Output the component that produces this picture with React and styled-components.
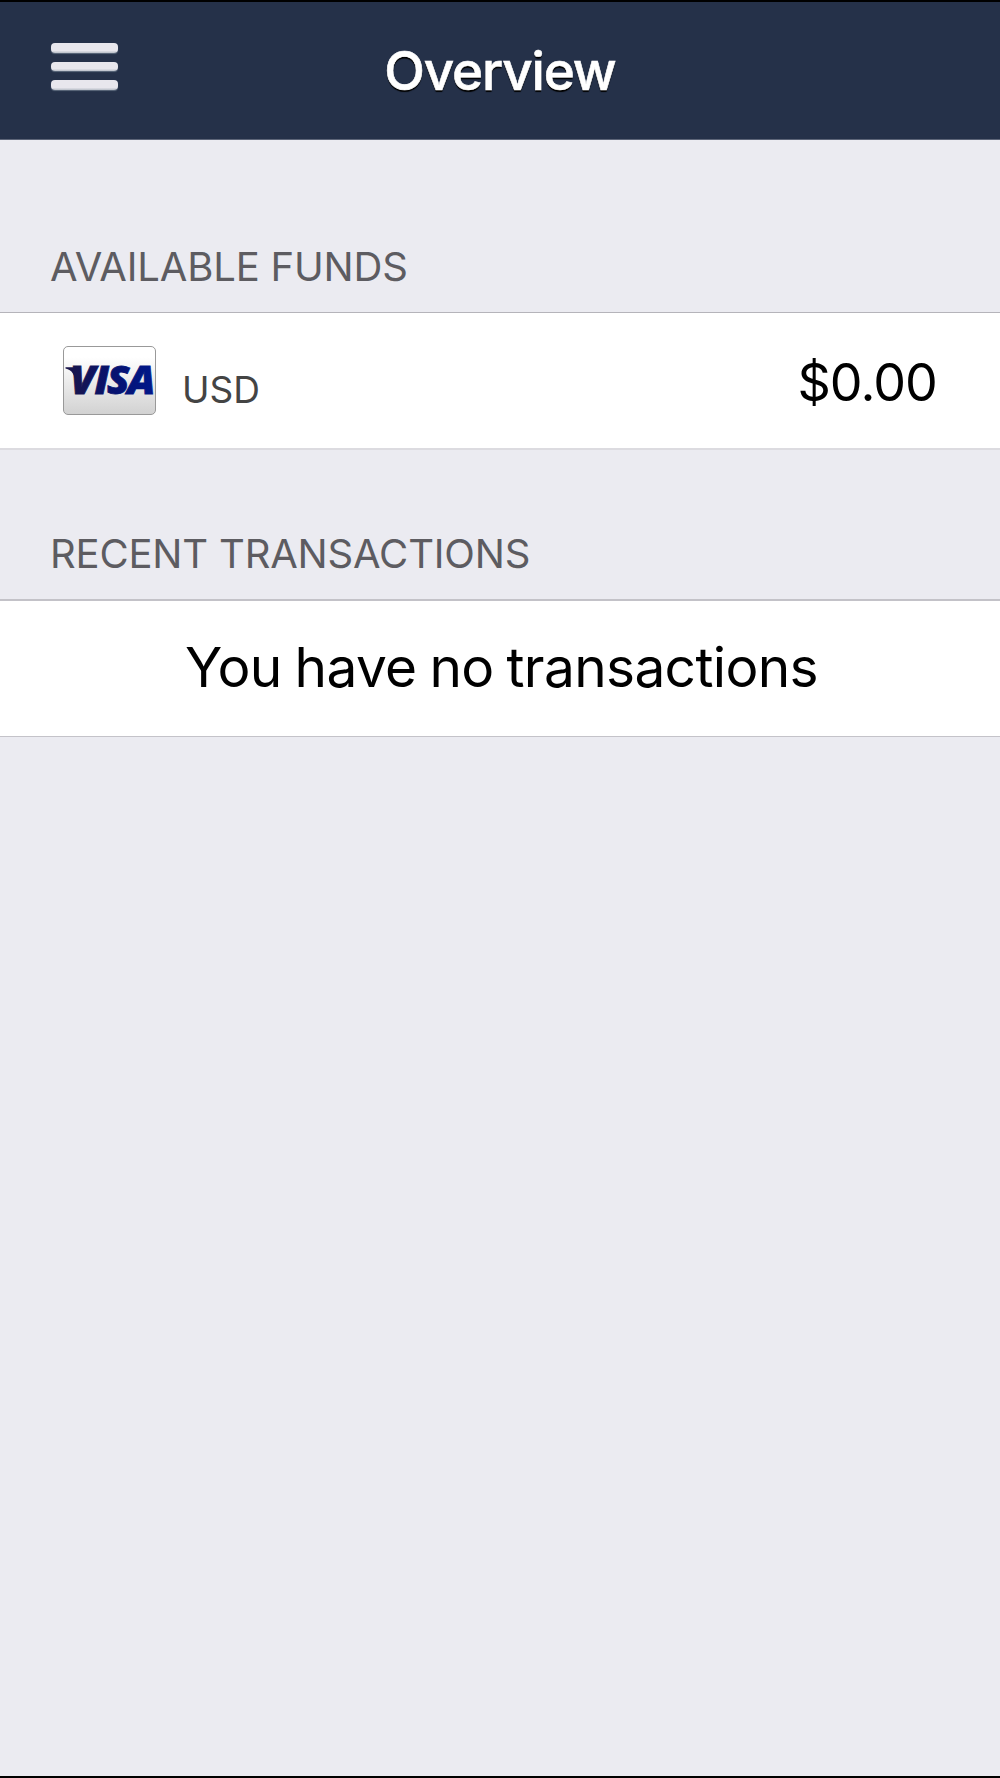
import styled, { createGlobalStyle } from 'styled-components';

function App() {
  return (
    <ScreenUI>
      <GlobalStyle />
      <HeaderUI>
        <MenuButton />
        <TitleUI>Overview</TitleUI>
      </HeaderUI>

      <SectionTitleUI $height={172}>AVAILABLE FUNDS</SectionTitleUI>
      <RowUI $topLine="1px solid #b5b4ba" $bottomLine="2px solid #dcdbe0">
        <VisaCard />
        <CurrencyUI>USD</CurrencyUI>
        <AmountUI>$0.00</AmountUI>
      </RowUI>

      <SectionTitleUI $height={149}>RECENT TRANSACTIONS</SectionTitleUI>
      <RowUI $topLine="2px solid #c3c2c8" $bottomLine="1px solid #c4c3c9">
        <EmptyUI>You have no transactions</EmptyUI>
      </RowUI>
    </ScreenUI>
  );
}

function MenuButton() {
  return (
    <MenuButtonUI aria-label="Menu">
      <MenuBarUI />
      <MenuBarUI />
      <MenuBarUI />
    </MenuButtonUI>
  );
}

function VisaCard() {
  return (
    <CardUI>
      <svg width="91" height="67" viewBox="0 0 91 67">
        <defs>
          <linearGradient id="visa" gradientUnits="userSpaceOnUse" x1="2" y1="0" x2="85" y2="0">
            <stop offset="0" stopColor="#1a1548" />
            <stop offset="0.5" stopColor="#07126e" />
            <stop offset="1" stopColor="#00188c" />
          </linearGradient>
        </defs>
        {/* Flare on the left arm of the V */}
        <path d="M1.500 20.200 H12 L16 34 L12.500 40 C11 27 8 23 1.500 21.500 Z" fill="url(#visa)" />
        <text
          transform="scale(1.080 1)"
          x="5.700 28.300 39.900 58.900"
          y="47.500"
          fontFamily="Open Sans"
          fontWeight="800"
          fontStyle="italic"
          fontSize="38"
          fill="url(#visa)"
          stroke="url(#visa)"
          strokeWidth="0.8"
        >
          VISA
        </text>
      </svg>
    </CardUI>
  );
}

const GlobalStyle = createGlobalStyle`
  * {
    box-sizing: border-box;
  }

  body {
    margin: 0;
    background-color: #ebebf1;
    font-family: Inter, 'Liberation Sans', sans-serif;
  }
`;

const ScreenUI = styled.div`
  width: 100%;
  height: 1778px;
  overflow: hidden;
  background-color: #ebebf1;
  border-top: 2px solid #000;
  border-bottom: 2px solid #000;
`;

const HeaderUI = styled.header`
  display: grid;
  grid-template-columns: 118px 1fr 118px;
  height: 138px;
  background-color: #253149;
  border-bottom: 1px solid #5d6578;
`;

const MenuButtonUI = styled.button`
  display: flex;
  flex-direction: column;
  gap: 9px;
  width: 118px;
  padding: 41px 0 0 51px;
  border: 0;
  background: none;
`;

const MenuBarUI = styled.span`
  width: 67px;
  height: 9.6px;
  border-radius: 4px;
  background: linear-gradient(#e8e7ed 75%, #b9bfc8);
  box-shadow: 0 1px 1px rgba(130, 145, 160, 0.6);
`;

const TitleUI = styled.h1`
  margin: 0;
  padding-top: 37px;
  color: #fff;
  font-size: 53px;
  font-weight: 550;
  letter-spacing: -1.15px;
  line-height: 64px;
  text-align: center;
  text-shadow: 0 2px 1px #000;
  -webkit-text-stroke: 0.6px #fff;
`;

const SectionTitleUI = styled.h2`
  display: flex;
  align-items: flex-end;
  height: ${props => props.$height}px;
  margin: 0;
  padding: 0 50px 21px;
  color: #5d5c61;
  font-size: 40px;
  font-weight: 400;
  letter-spacing: -0.18px;
  line-height: 48px;
`;

const RowUI = styled.div`
  display: flex;
  height: 138px;
  padding: 0 63px;
  background-color: #fff;
  border-top: ${props => props.$topLine};
  border-bottom: ${props => props.$bottomLine};
`;

const CardUI = styled.div`
  width: 93px;
  height: 69px;
  margin-top: 33px;
  border: 1px solid #999;
  border-radius: 5px;
  background: linear-gradient(#fff 15%, #d2d2d2);
`;

const CurrencyUI = styled.span`
  margin: 55px 0 0 26px;
  color: #444;
  font-size: 37px;
  line-height: 44px;
`;

const AmountUI = styled.span`
  margin: 38px 0 0 auto;
  font-size: 52px;
  letter-spacing: -0.9px;
  line-height: 64px;
`;

const EmptyUI = styled.p`
  flex: 1;
  margin: 33px 0 0;
  padding-left: 3px;
  font-size: 55px;
  letter-spacing: -0.65px;
  line-height: 66px;
  text-align: center;
  word-spacing: -1.9px;
`;

export default App;
